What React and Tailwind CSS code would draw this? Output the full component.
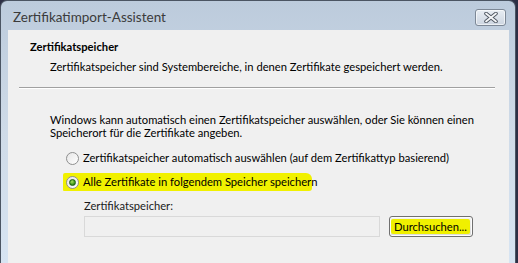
import React from 'react';

const font = "font-['Segoe_UI','Lato',sans-serif]";

const Radio = ({ checked }) => (
  <span className="relative flex h-[13px] w-[13px] shrink-0 items-center justify-center rounded-full border border-[#8e8f8f] bg-gradient-to-br from-[#e6e6e6] to-[#ffffff]">
    {checked && (
      <span className="h-[7px] w-[7px] rounded-full border border-[#1b5e0c] bg-[radial-gradient(circle_at_40%_35%,#a8e05a,#2e8a12_70%)]" />
    )}
  </span>
);

export default function App() {
  return (
    <div className={`h-[263px] w-[518px] overflow-hidden bg-[#2d2f45] ${font} text-[11.2px] text-black`}>
      <div className="flex h-[263px] w-[516px] flex-col rounded-t-[7px] border border-b-0 border-[#4b5563] bg-gradient-to-b from-[#bccbdc] via-[#cfdbe8] to-[#d7e4f2]">
        {/* title bar */}
        <div className="flex h-[29px] shrink-0 items-center justify-between pl-[12px] pr-[9px]">
          <span className="whitespace-nowrap pt-[3px] text-[13.5px] text-[#3b3b3b]">Zertifikatimport-Assistent</span>
          <div className="mt-[3px] flex h-[17px] w-[31px] items-center justify-center rounded-[3px] border border-[#7d8896] bg-gradient-to-b from-[#e8edf3] to-[#cdd6e1] shadow-[inset_0_0_0_1px_rgba(255,255,255,0.6)]">
            <svg width="14" height="11" viewBox="0 0 14 11">
              <path d="M2 1.5 L12 9.5 M12 1.5 L2 9.5" stroke="#4d5560" strokeWidth="3.6" strokeLinecap="round" />
              <path d="M2 1.5 L12 9.5 M12 1.5 L2 9.5" stroke="#f4f6f8" strokeWidth="1.8" strokeLinecap="round" />
            </svg>
          </div>
        </div>

        {/* frame */}
        <div className="flex flex-1 px-[7px] pr-[6px]">
          <div className="flex flex-1 flex-col bg-[#f0f0f0] whitespace-nowrap">
            {/* header */}
            <div className="pl-[22px] pt-[9px]">
              <div className="font-bold leading-[16px]">Zertifikatspeicher</div>
              <div className="mt-[4px] pl-[20px] leading-[16px]">
                Zertifikatspeicher sind Systembereiche, in denen Zertifikate gespeichert werden.
              </div>
            </div>
            <div className="ml-[11px] mt-[12px] h-[2px] w-[476px] border-t border-b border-t-[#a0a0a0] border-b-white" />

            {/* body */}
            <div className="pl-[42px] pt-[24px]">
              <div className="leading-[13px]">
                Windows kann automatisch einen Zertifikatspeicher auswählen, oder Sie können einen
                <br />
                Speicherort für die Zertifikate angeben.
              </div>

              <div className="mt-[11px] flex items-center gap-[4px] pl-[16px] leading-[16px]">
                <Radio />
                <span>Zertifikatspeicher automatisch auswählen (auf dem Zertifikattyp basierend)</span>
              </div>

              <div className="ml-[13px] mt-[7px] flex h-[18px] w-[249px] items-center gap-[4px] rounded-[2px_6px_3px_1px] bg-[#f1f100] pl-[3px] leading-[16px]">
                <Radio checked />
                <span>Alle Zertifikate in folgendem Speicher speichern</span>
              </div>

              <div className="mt-[7px] pl-[34px] leading-[16px] text-[#1a1a1a]">Zertifikatspeicher:</div>

              <div className="mt-[2px] flex items-center gap-[9px] pl-[34px]">
                <div className="h-[21px] w-[296px] border border-[#d9d9d9] bg-[#f0f0f0]" />
                <div className="flex h-[21px] w-[84px] items-center rounded-[3px] border border-[#707070] bg-gradient-to-b from-[#f3f3f3] to-[#dadada] px-[1px] shadow-[inset_0_0_0_1px_#fcfcfc]">
                  <span className="rounded-[2px] bg-[#f0f000] px-[3px] leading-[15px]">Durchsuchen...</span>
                </div>
              </div>
            </div>
          </div>
        </div>
      </div>
    </div>
  );
}
